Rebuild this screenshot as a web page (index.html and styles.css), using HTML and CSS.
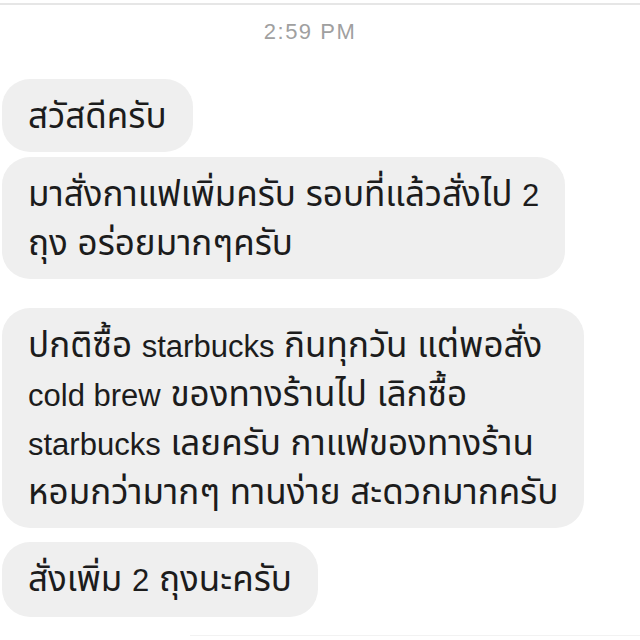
FILE: index.html
```html
<!DOCTYPE html>
<html lang="th">
<head>
    <meta charset="UTF-8">
    <meta name="viewport" content="width=device-width, initial-scale=1.0">
    <title>แชท</title>
    <link rel="stylesheet" href="styles.css">
</head>
<body>
<div class="top-line"></div>
<div class="time">2:59 PM</div>

<div class="thread">
    <div class="group">
        <div class="bubble">สวัสดีครับ</div>
        <div class="bubble">มาสั่งกาแฟเพิ่มครับ รอบที่แล้วสั่งไป <span class="en">2</span><br>ถุง อร่อยมากๆครับ</div>
    </div>
    <div class="group group-far">
        <div class="bubble">ปกติซื้อ <span class="en">starbucks</span> กินทุกวัน แต่พอสั่ง<br><span class="en">cold brew</span> ของทางร้านไป เลิกซื้อ<br><span class="en">starbucks</span> เลยครับ กาแฟของทางร้าน<br>หอมกว่ามากๆ ทานง่าย สะดวกมากครับ</div>
    </div>
    <div class="group group-near">
        <div class="bubble">สั่งเพิ่ม <span class="en">2</span> ถุงนะครับ</div>
    </div>
</div>

<div class="composer"></div>
</body>
</html>
```

FILE: styles.css
```css
body {
    margin: 0;
    background-color: #ffffff;
    font-family: "Liberation Sans", "Noto Sans Thai", "Noto Sans", sans-serif;
    color: #1c1c1c;
    height: 640px;
    overflow: hidden;
}
.top-line {
    margin-top: 3px;
    height: 2px;
    background-color: #e6e6e6;
}
.time {
    margin-top: 14px;
    padding-right: 20px;
    text-align: center;
    font-size: 22px;
    letter-spacing: 1.5px;
    color: #a0a0a0;
}
.thread {
    margin-top: 34px;
    padding-left: 2px;
    display: flex;
    flex-direction: column;
}
.group {
    display: flex;
    flex-direction: column;
    align-items: flex-start;
    gap: 5px;
}
.group-far {
    margin-top: 29px;
}
.group-near {
    margin-top: 14px;
}
.bubble {
    background-color: #efefef;
    border-radius: 28px;
    padding: 13px 26px;
    font-size: 35px;
    line-height: 47px;
    white-space: nowrap;
}
.en {
    font-size: 31px;
}
.composer {
    margin: 18px 0 0 190px;
    height: 6px;
    border-top: 1px solid #f2f2f2;
}
```
